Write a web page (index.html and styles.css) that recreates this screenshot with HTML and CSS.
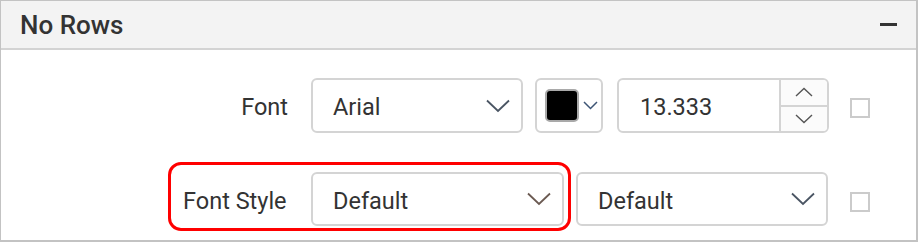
FILE: index.html
```html
<!DOCTYPE html>
<html>
<head>
<meta charset="utf-8">
<link rel="stylesheet" href="styles.css">
</head>
<body>
<div class="panel">
  <div class="header">
    <span class="title">No Rows</span>
    <span class="collapse"></span>
  </div>
  <div class="content">
    <div class="row row1">
      <div class="label label-font">Font</div>
      <div class="dropdown dd-font">
        <span class="value">Arial</span>
        <svg class="chev" width="24" height="14" viewBox="0 0 24 14"><polyline points="1,1.5 12,12 23,1.5" fill="none" stroke="#4a5563" stroke-width="1.8"/></svg>
      </div>
      <div class="picker">
        <span class="swatch"></span>
        <svg class="chev-sm" width="15" height="9" viewBox="0 0 15 9"><polyline points="1,1 7.5,7.5 14,1" fill="none" stroke="#3d5575" stroke-width="1.5"/></svg>
      </div>
      <div class="numeric">
        <span class="value num-value">13.333</span>
        <div class="spin">
          <div class="spin-btn"><svg width="18" height="10" viewBox="0 0 18 10"><polyline points="1,9 9,1.5 17,9" fill="none" stroke="#555" stroke-width="1.4"/></svg></div>
          <div class="spin-btn spin-down"><svg width="18" height="10" viewBox="0 0 18 10"><polyline points="1,1 9,8.5 17,1" fill="none" stroke="#555" stroke-width="1.4"/></svg></div>
        </div>
      </div>
      <span class="check"></span>
    </div>
    <div class="row row2">
      <div class="highlight">
        <div class="label label-style">Font Style</div>
        <div class="dropdown dd-style">
          <span class="value">Default</span>
          <svg class="chev" width="24" height="14" viewBox="0 0 24 14"><polyline points="1,1.5 12,12 23,1.5" fill="none" stroke="#6b5a52" stroke-width="1.8"/></svg>
        </div>
      </div>
      <div class="dropdown dd-weight">
        <span class="value">Default</span>
        <svg class="chev" width="24" height="14" viewBox="0 0 24 14"><polyline points="1,1.5 12,12 23,1.5" fill="none" stroke="#4a5563" stroke-width="1.8"/></svg>
      </div>
      <span class="check check2"></span>
    </div>
  </div>
</div>
</body>
</html>
```
FILE: styles.css
```css
* { box-sizing: border-box; }
html, body { margin: 0; padding: 0; background: #fff; }
body { font-family: Roboto, "Liberation Sans", sans-serif; color: #333; }

.panel {
  width: 918px;
  height: 242px;
  border: 1px solid #c3c3c3;
  border-right-width: 2px;
  border-bottom-width: 2px;
  background: #fff;
}

.header {
  height: 49px;
  background: #f3f3f3;
  border-bottom: 2px solid #d3d3d3;
  display: flex;
  align-items: center;
  justify-content: space-between;
  padding: 0 18px 0 19px;
}
.title {
  font-size: 26px;
  font-weight: 500;
  color: #333;
  padding-top: 1px;
}
.collapse {
  width: 17px;
  height: 2.5px;
  background: #333;
  margin-right: 1px;
}

.content { padding-top: 28px; }

.row { display: flex; align-items: center; }
.row2 { margin-top: 29px; align-items: flex-start; }

.label { font-size: 23.5px; color: #333; padding-top: 3px; }
.label-font {
  width: 120px;
  margin-left: 167px;
  text-align: right;
  margin-right: 23px;
}
.label-style {
  width: 105px;
  margin-right: 23px;
  white-space: nowrap;
}

.dropdown {
  height: 55px;
  border: 2px solid #d4d4d4;
  border-radius: 6px;
  display: flex;
  align-items: center;
  justify-content: space-between;
  padding: 0 11px 0 20px;
  background: #fff;
}
.value { font-size: 23.5px; color: #333; padding-top: 3px; }
.chev { display: block; }

.dd-font { width: 212px; }

.picker {
  width: 68px;
  height: 55px;
  margin-left: 12px;
  border: 2px solid #d4d4d4;
  border-radius: 6px;
  display: flex;
  align-items: center;
  padding-left: 8px;
}
.swatch {
  width: 34px;
  height: 33px;
  background: #000;
  border: 2px solid #a9a9a9;
  border-radius: 5px;
}
.chev-sm { margin-left: 4px; display: block; }

.numeric {
  width: 212px;
  height: 55px;
  margin-left: 14px;
  border: 2px solid #d4d4d4;
  border-radius: 6px;
  display: flex;
  overflow: hidden;
}
.num-value {
  flex: 1;
  padding-left: 21px;
  display: flex;
  align-items: center;
}
.spin {
  width: 48px;
  border-left: 2px solid #d4d4d4;
  display: flex;
  flex-direction: column;
  background: #fbfbfb;
}
.spin-btn {
  flex: 1;
  display: flex;
  align-items: center;
  justify-content: center;
}
.spin-btn svg { display: block; }
.spin-down { border-top: 2px solid #d4d4d4; }

.check {
  width: 20px;
  height: 20px;
  border: 2px solid #cbcbcb;
  margin-left: 21px;
  margin-top: 5px;
  background: #fff;
}
.check2 { margin-left: 22px; margin-top: 30px; }

.highlight {
  margin-left: 167px;
  border: 3px solid #ff0000;
  border-radius: 13px;
  padding: 7px 4px 2px 12px;
  display: flex;
  align-items: center;
}
.dd-style { width: 253px; height: 54px; }
.dd-weight { width: 252px; height: 54px; margin-left: 5px; margin-top: 10px; }
```
